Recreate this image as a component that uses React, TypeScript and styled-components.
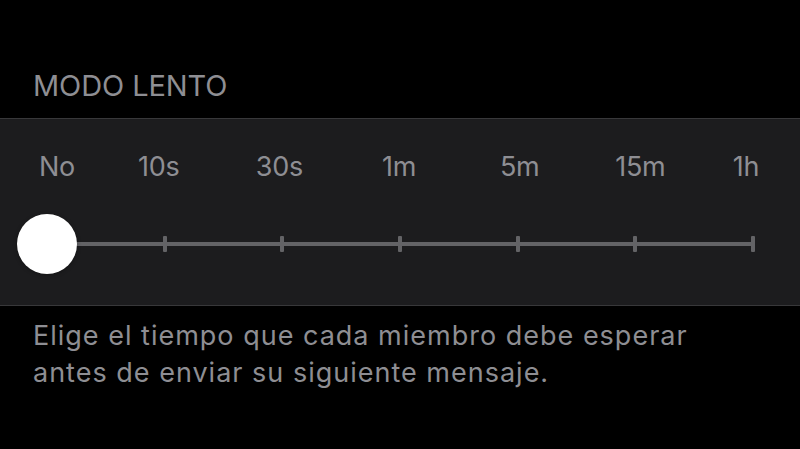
import React from 'react';
import styled, { createGlobalStyle } from 'styled-components';

const GlobalStyle = createGlobalStyle`
  html, body {
    margin: 0;
    padding: 0;
    background: #000;
  }
  body {
    font-family: Inter, "Noto Sans", sans-serif;
    -webkit-font-smoothing: antialiased;
  }
`;

const steps = [
  { label: 'No', nudge: 10 },
  { label: '10s', nudge: -6 },
  { label: '30s', nudge: -3 },
  { label: '1m', nudge: -1 },
  { label: '5m', nudge: 2 },
  { label: '15m', nudge: 5 },
  { label: '1h', nudge: -7 },
];

const App: React.FC = () => {
  const value = 0;
  return (
    <>
      <GlobalStyle />
      <Page>
        <SectionHeader>MODO LENTO</SectionHeader>
        <Panel>
          <LabelRow>
            {steps.map((s) => (
              <Anchor key={s.label}>
                <StepLabel style={{ transform: `translateX(${s.nudge}px)` }}>{s.label}</StepLabel>
              </Anchor>
            ))}
          </LabelRow>
          <Slider>
            <Track>
              {steps.map((s) => (
                <Anchor key={s.label}>
                  <Tick />
                </Anchor>
              ))}
              <Thumb style={{ left: `${(value / (steps.length - 1)) * 100}%` }} />
            </Track>
          </Slider>
        </Panel>
        <Footer>
          Elige el tiempo que cada miembro debe esperar
          <br />
          antes de enviar su siguiente mensaje.
        </Footer>
      </Page>
    </>
  );
};

export default App;

const Page = styled.div`
  width: 800px;
  height: 449px;
  overflow: hidden;
  background: #000;
`;

const SectionHeader = styled.div`
  padding: 68px 33px 15px;
  font-size: 29px;
  line-height: 35px;
  color: #8e8e93;
  letter-spacing: -0.1px;
`;

const Panel = styled.div`
  background: #1c1c1e;
  border-top: 1.5px solid #38383a;
  border-bottom: 1.5px solid #38383a;
  padding: 31px 47px 31px;
`;

const LabelRow = styled.div`
  display: flex;
  justify-content: space-between;
  height: 34px;
`;

const Anchor = styled.div`
  width: 0;
  display: flex;
  justify-content: center;
  align-items: center;
`;

const StepLabel = styled.span`
  font-size: 27px;
  line-height: 34px;
  color: #8e8e93;
  white-space: nowrap;
  letter-spacing: -0.3px;
`;

const Slider = styled.div`
  margin-top: 30px;
  height: 60px;
  display: flex;
  align-items: center;
`;

const Track = styled.div`
  position: relative;
  flex: 1;
  height: 16px;
  display: flex;
  justify-content: space-between;
  background: linear-gradient(#636366, #636366) center / 100% 4px no-repeat;
`;

const Tick = styled.div`
  flex: none;
  width: 4px;
  height: 16px;
  border-radius: 1px;
  background: #636366;
`;

const Thumb = styled.div`
  position: absolute;
  top: 50%;
  width: 60px;
  height: 60px;
  border-radius: 50%;
  background: #fff;
  transform: translate(-50%, -50%);
  box-shadow: 0 1px 4px rgba(0, 0, 0, 0.3);
`;

const Footer = styled.p`
  margin: 11px 0 0;
  padding: 0 33px;
  font-size: 27px;
  line-height: 37px;
  color: #8e8e93;
  letter-spacing: 1px;
  white-space: nowrap;
`;
